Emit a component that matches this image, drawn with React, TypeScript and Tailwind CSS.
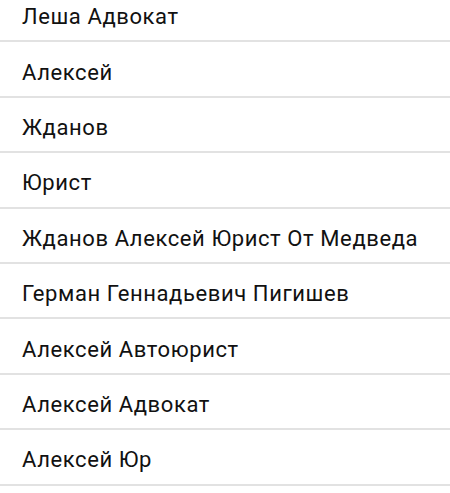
const NAMES = [
  "Леша Адвокат",
  "Алексей",
  "Жданов",
  "Юрист",
  "Жданов Алексей Юрист От Медведа",
  "Герман Геннадьевич Пигишев",
  "Алексей Автоюрист",
  "Алексей Адвокат",
  "Алексей Юр",
];

export default function App() {
  return (
    <div className="h-[493px] w-[450px] overflow-hidden bg-white">
      <ul className="-mt-[13px]">
        {NAMES.map((name) => (
          <li
            key={name}
            className="flex h-[55.4px] items-center border-b-2 border-[#e2e2e2] pl-[22px] pt-[6px] font-['Roboto',sans-serif] text-[22px] tracking-[0.6px] text-[#111111]"
          >
            {name}
          </li>
        ))}
      </ul>
    </div>
  );
}
